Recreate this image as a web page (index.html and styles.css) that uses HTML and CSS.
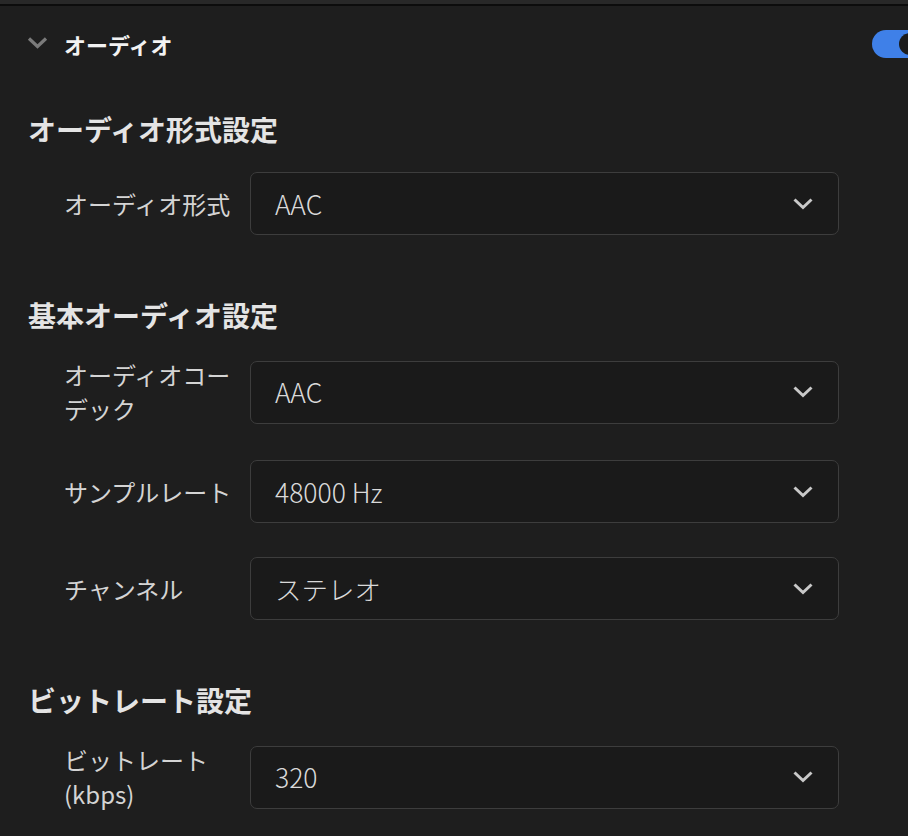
FILE: index.html
```html
<!DOCTYPE html>
<html lang="ja">
<head>
<meta charset="utf-8">
<link rel="stylesheet" href="styles.css">
</head>
<body>
<div class="topbar"></div>
<div class="panel-header">
  <div class="header-left">
    <svg class="collapse" width="21" height="13" viewBox="0 0 21 13"><path d="M2 2.5 L10.5 10.5 L19 2.5" fill="none" stroke="#7b7b7b" stroke-width="3.2"/></svg>
    <span class="panel-title">オーディオ</span>
  </div>
  <div class="toggle"><span class="knob"></span></div>
</div>

<section class="section first">
  <h2 class="section-title">オーディオ形式設定</h2>
  <div class="row">
    <div class="label">オーディオ形式</div>
    <div class="select"><span class="value">AAC</span><svg class="chev" width="20" height="12" viewBox="0 0 20 12"><path d="M1.5 1.5 L10 9.5 L18.5 1.5" fill="none" stroke="#c9c9c9" stroke-width="3"/></svg></div>
  </div>
</section>

<section class="section">
  <h2 class="section-title">基本オーディオ設定</h2>
  <div class="row">
    <div class="label">オーディオコーデック</div>
    <div class="select"><span class="value">AAC</span><svg class="chev" width="20" height="12" viewBox="0 0 20 12"><path d="M1.5 1.5 L10 9.5 L18.5 1.5" fill="none" stroke="#c9c9c9" stroke-width="3"/></svg></div>
  </div>
  <div class="row">
    <div class="label">サンプルレート</div>
    <div class="select"><span class="value">48000 Hz</span><svg class="chev" width="20" height="12" viewBox="0 0 20 12"><path d="M1.5 1.5 L10 9.5 L18.5 1.5" fill="none" stroke="#c9c9c9" stroke-width="3"/></svg></div>
  </div>
  <div class="row">
    <div class="label">チャンネル</div>
    <div class="select"><span class="value">ステレオ</span><svg class="chev" width="20" height="12" viewBox="0 0 20 12"><path d="M1.5 1.5 L10 9.5 L18.5 1.5" fill="none" stroke="#c9c9c9" stroke-width="3"/></svg></div>
  </div>
</section>

<section class="section">
  <h2 class="section-title">ビットレート設定</h2>
  <div class="row">
    <div class="label">ビットレート (kbps)</div>
    <div class="select"><span class="value">320</span><svg class="chev" width="20" height="12" viewBox="0 0 20 12"><path d="M1.5 1.5 L10 9.5 L18.5 1.5" fill="none" stroke="#c9c9c9" stroke-width="3"/></svg></div>
  </div>
</section>
</body>
</html>
```
FILE: styles.css
```css
html, body {
  margin: 0;
  padding: 0;
  overflow: hidden;
  background: #1e1e1e;
  font-family: "Noto Sans CJK JP", "Noto Sans", sans-serif;
  color: #d6d6d6;
}

.topbar {
  height: 4px;
  background: #282828;
  border-bottom: 2px solid #0c0c0c;
}

.panel-header {
  height: 76px;
  display: flex;
  align-items: center;
  justify-content: space-between;
}

.header-left {
  display: flex;
  align-items: center;
  padding-left: 27px;
}

.collapse {
  display: block;
  margin-top: -4px;
}

.panel-title {
  margin-left: 16px;
  font-size: 22px;
  font-weight: 700;
  color: #f2f2f2;
  line-height: 30px;
}

.toggle {
  width: 52px;
  height: 28px;
  border-radius: 14px;
  background: #3f80e8;
  margin-right: -16px;
  display: flex;
  align-items: center;
  justify-content: flex-end;
  padding-right: 3px;
  box-sizing: border-box;
}

.knob {
  width: 22px;
  height: 22px;
  border-radius: 50%;
  background: #1b1b1b;
}

.section {
  display: flex;
  flex-direction: column;
  gap: 34px;
  padding-left: 28px;
  margin-top: 64px;
}

.section.first {
  margin-top: 31px;
}

.section-title {
  margin: 0 0 -7px 0;
  font-size: 28px;
  font-weight: 700;
  line-height: 32px;
  color: #e4e4e4;
}

.row {
  display: flex;
  align-items: center;
  gap: 10px;
  padding-left: 36px;
}

.label {
  width: 176px;
  font-size: 24px;
  line-height: 34px;
  color: #d4d4d4;
}

.select {
  width: 589px;
  height: 63px;
  box-sizing: border-box;
  border: 1.5px solid #3d3d3d;
  border-radius: 7px;
  background: #1a1a1a;
  display: flex;
  align-items: center;
  justify-content: space-between;
  padding: 0 25px 0 24px;
}

.value {
  font-size: 26.5px;
  font-weight: 300;
  color: #d9d9d9;
  line-height: 32px;
}

.chev {
  display: block;
}
```
